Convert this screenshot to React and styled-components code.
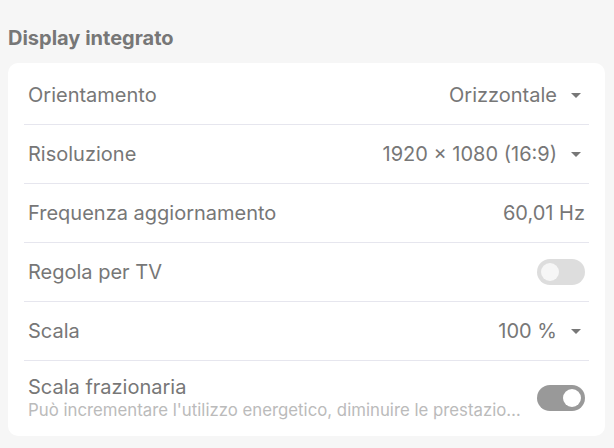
import * as React from "react"
import styled, { createGlobalStyle } from "styled-components"

const GlobalStyle = createGlobalStyle`
  html, body {
    margin: 0;
    padding: 0;
    background: #f6f6f6;
    font-family: Inter, "Noto Sans", sans-serif;
  }
`

const Page = styled.div`
  width: 614px;
  height: 448px;
  padding: 26px 9px 0 8px;
  box-sizing: border-box;
`

const Heading = styled.h2`
  margin: 0 0 13px 0;
  font-size: 20px;
  font-weight: 650;
  color: #777;
  line-height: 24px;
`

const Card = styled.div`
  background: #fff;
  border-radius: 10px;
  padding: 3px 16px 2px 16px;
`

const Row = styled.div`
  display: flex;
  align-items: center;
  justify-content: space-between;
  height: ${(p) => (p.tall ? "73px" : "58px")};
  padding: 0 4px;
  border-bottom: ${(p) => (p.last ? "none" : "1px solid #e6e6ee")};
`

const Texts = styled.div`
  display: flex;
  flex-direction: column;
  min-width: 0;
  flex: 1;
`

const Label = styled.div`
  font-size: 20px;
  color: #777;
  line-height: 24px;
`

const Sub = styled.div`
  font-size: 16.8px;
  color: #bbb;
  line-height: 22px;
  white-space: nowrap;
  overflow: hidden;
  text-overflow: ellipsis;
  max-width: 496px;
`

const Value = styled.div`
  display: flex;
  align-items: center;
  gap: 14px;
  font-size: 20px;
  color: #777;
`

const Caret = styled.span`
  width: 0;
  height: 0;
  border-left: 5px solid transparent;
  border-right: 5px solid transparent;
  border-top: 5px solid #777;
  margin-right: 4px;
`

const Switch = styled.div`
  position: relative;
  width: 48px;
  height: 26px;
  border-radius: 13px;
  flex-shrink: 0;
  background: ${(p) => (p.on ? "#999" : "#ddd")};
  &::after {
    content: "";
    position: absolute;
    top: 4px;
    left: ${(p) => (p.on ? "26px" : "4px")};
    width: 18px;
    height: 18px;
    border-radius: 50%;
    background: ${(p) => (p.on ? "#fff" : "#f6f6f6")};
  }
`

export default function App() {
  return (
    <Page>
      <GlobalStyle />
      <Heading>Display integrato</Heading>
      <Card>
        <Row>
          <Label>Orientamento</Label>
          <Value>
            Orizzontale <Caret />
          </Value>
        </Row>
        <Row>
          <Label>Risoluzione</Label>
          <Value>
            1920 × 1080 (16:9) <Caret />
          </Value>
        </Row>
        <Row>
          <Label>Frequenza aggiornamento</Label>
          <Value>60,01 Hz</Value>
        </Row>
        <Row>
          <Label>Regola per TV</Label>
          <Switch />
        </Row>
        <Row>
          <Label>Scala</Label>
          <Value>
            100 % <Caret />
          </Value>
        </Row>
        <Row tall last>
          <Texts>
            <Label>Scala frazionaria</Label>
            <Sub>
              Può incrementare l'utilizzo energetico, diminuire le prestazioni
              delle applicazioni e ridurre la nitidezza
            </Sub>
          </Texts>
          <Switch on />
        </Row>
      </Card>
    </Page>
  )
}
